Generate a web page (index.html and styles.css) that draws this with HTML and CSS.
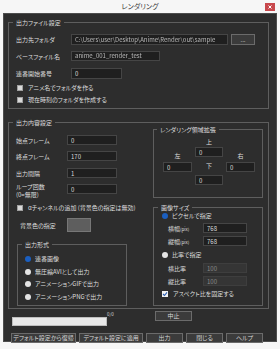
FILE: index.html
```html
<!DOCTYPE html>
<html>
<head>
    <meta charset="utf-8">
    <title>レンダリング</title>
    <link rel="stylesheet" href="styles.css">
</head>
<body>
<div class="window">
    <div class="titlebar">
        <span class="title">レンダリング</span>
        <span class="close">
            <svg width="4" height="4" viewBox="0 0 4 4"><path d="M0.5 0.5L3.5 3.5M3.5 0.5L0.5 3.5" stroke="#fff" stroke-width="1"/></svg>
        </span>
    </div>

    <div class="client">
        <fieldset class="group file-group">
            <legend>出力ファイル設定</legend>

            <div class="row">
                <label class="lbl">出力先フォルダ</label>
                <div class="field path"><span class="blurred">C:\Users\user\Desktop\Anime\Render\out\sample</span></div>
                <button class="btn browse">...</button>
            </div>
            <div class="row name-row">
                <label class="lbl">ベースファイル名</label>
                <div class="field basename"><span class="blurred">anime_001_render_test</span></div>
            </div>
            <div class="row start-row">
                <label class="lbl">連番開始番号</label>
                <input class="field start" value="0">
            </div>

            <label class="check first-check"><span class="box"></span>アニメ名でフォルダを作る</label>
            <label class="check"><span class="box"></span>現在時刻のフォルダを作成する</label>
        </fieldset>

        <fieldset class="group content-group">
            <legend>出力内容設定</legend>
            <div class="columns">
                <div class="left-col">
                    <div class="frow">
                        <label class="flbl">始点フレーム</label>
                        <input class="field short" value="0">
                    </div>
                    <div class="frow r2">
                        <label class="flbl">終点フレーム</label>
                        <input class="field short" value="170">
                    </div>
                    <div class="frow r3">
                        <label class="flbl">出力間隔</label>
                        <input class="field short" value="1">
                    </div>
                    <div class="frow loop-row">
                        <label class="flbl">ループ回数<br>(0=無限)</label>
                        <input class="field short" value="0">
                    </div>

                    <label class="check alpha-check"><span class="box"></span>αチャンネルの追加 (背景色の指定は無効)</label>

                    <div class="frow color-row">
                        <span class="flbl indent">背景色の指定</span>
                        <span class="swatch"></span>
                    </div>

                    <fieldset class="group format-group">
                        <legend>出力形式</legend>
                        <label class="radio"><span class="dot on"></span>連番画像</label>
                        <label class="radio"><span class="dot"></span>無圧縮AVIとして出力</label>
                        <label class="radio"><span class="dot"></span>アニメーションGIFで出力</label>
                        <label class="radio"><span class="dot"></span>アニメーションPNGで出力</label>
                    </fieldset>
                </div>

                <div class="right-col">
                    <fieldset class="group expand-group">
                        <legend>レンダリング領域拡張</legend>
                        <div class="expand-grid">
                            <span class="mid up">上</span>
                            <span class="side">左</span>
                            <input class="field cell" value="0">
                            <span class="side">右</span>
                            <input class="field cell lower" value="0">
                            <span class="mid down">下</span>
                            <input class="field cell lower" value="0">
                            <input class="field cell last" value="0">
                        </div>
                    </fieldset>

                    <fieldset class="group size-group">
                        <legend>画像サイズ</legend>
                        <label class="radio"><span class="dot on"></span>ピクセルで指定</label>
                        <div class="srow">
                            <span class="slbl">横幅<small>(pix)</small></span>
                            <input class="field size" value="768">
                        </div>
                        <div class="srow tight">
                            <span class="slbl">縦幅<small>(pix)</small></span>
                            <input class="field size" value="768">
                        </div>
                        <label class="radio ratio-radio"><span class="dot"></span>比率で指定</label>
                        <div class="srow">
                            <span class="slbl">横比率</span>
                            <input class="field size" value="100" disabled>
                        </div>
                        <div class="srow tight">
                            <span class="slbl">縦比率</span>
                            <input class="field size" value="100" disabled>
                        </div>
                        <label class="check aspect-check">
                            <span class="box checked">
                                <svg width="6" height="6" viewBox="0 0 6 6"><path d="M1 3L2.5 4.5L5 1.3" fill="none" stroke="#2b5fb5" stroke-width="1.1"/></svg>
                            </span>アスペクト比を固定する
                        </label>
                    </fieldset>
                </div>
            </div>
        </fieldset>

        <div class="footer">
            <div class="progress-row">
                <div class="progress-wrap">
                    <div class="progress"></div>
                    <span class="count">0/0</span>
                </div>
                <button class="btn small">中止</button>
            </div>
            <div class="button-row">
                <button class="btn reset-btn">デフォルト設定から復帰</button>
                <button class="btn apply-btn">デフォルト設定に適用</button>
                <button class="btn small push">出力</button>
                <button class="btn small">閉じる</button>
                <button class="btn small">ヘルプ</button>
            </div>
        </div>
    </div>
</div>
</body>
</html>
```

FILE: styles.css
```css
* {
    box-sizing: border-box;
}

body {
    margin: 0;
    background: #f6f6f6;
    font-family: "Noto Sans CJK JP", "Noto Sans", sans-serif;
    font-size: 6px;
    font-feature-settings: "palt";
    color: #dedede;
}

.window {
    width: 280px;
    height: 349px;
    background: #f6f6f6;
}

/* title bar */
.titlebar {
    height: 13px;
    display: grid;
    grid-template-columns: 1fr auto 1fr;
    align-items: center;
}

.title {
    grid-column: 2;
    font-size: 7px;
    line-height: 13px;
    color: #3a3a3a;
}

.close {
    grid-column: 3;
    justify-self: end;
    width: 10px;
    height: 8px;
    margin-right: 5px;
    background: #c8484c;
    display: flex;
    align-items: center;
    justify-content: center;
}

.close svg {
    display: block;
}

/* dark client area */
.client {
    margin: 0 3px;
    height: 329px;
    background: #2d2d2d;
    border: 1px solid #4d4d4d;
    padding: 4px 4px 0 4px;
}

.group {
    margin: 0;
    min-width: 0;
    border: 1px solid #5e5e5e;
    padding: 0 6px 4px 7px;
}

.group legend {
    padding: 0 3px;
    margin-left: -3px;
    line-height: 9px;
    color: #dedede;
}

.field {
    display: block;
    height: 10px;
    margin: 0;
    padding: 0 3px;
    border: 1px solid #454545;
    background: #1f1f1f;
    color: #dcdcdc;
    font-family: inherit;
    font-size: 6px;
    line-height: 8px;
    overflow: hidden;
    white-space: nowrap;
}

.field:disabled {
    background: #353535;
    border-color: #3e3e3e;
    color: #8a8a8a;
}

.btn {
    height: 10px;
    padding: 0;
    border: 1px solid #6b6b6b;
    background: #3b3b3b;
    color: #d6d6d6;
    font-family: inherit;
    font-size: 6px;
    line-height: 8px;
    font-feature-settings: "palt";
}

/* checkboxes & radios */
.check, .radio {
    display: flex;
    align-items: center;
    height: 8px;
    line-height: 8px;
    white-space: nowrap;
}

.box {
    width: 6px;
    height: 6px;
    margin: 0 5px 0 1px;
    background: #d9d9d9;
    border: 1px solid #a0a0a0;
}

.box.checked {
    background: #f2f2f2;
    border: none;
}

.box svg {
    display: block;
}

.dot {
    width: 6px;
    height: 6px;
    margin-right: 4px;
    border-radius: 50%;
    background: #e4e4e4;
}

.dot.on {
    background: #1b5fc0;
}

/* output file group */
.file-group {
    margin-right: 3px;
    padding-top: 7px;
}

.row {
    display: flex;
    align-items: center;
}

.lbl {
    width: 55px;
    white-space: nowrap;
}

.path {
    width: 157px;
    height: 11px;
    line-height: 9px;
}

.blurred {
    display: inline-block;
    color: #b8b8b8;
    filter: blur(0.7px);
}

.browse {
    width: 24px;
    height: 11px;
    margin-left: 3px;
}

.name-row {
    margin-top: 6px;
}

.basename {
    width: 89px;
}

.start-row {
    margin-top: 7px;
}

.start {
    width: 51px;
    height: 11px;
}

.first-check {
    margin-top: 5px;
}

.first-check + .check {
    margin-top: 4px;
}

/* output content group */
.content-group {
    margin: 9px 3px 0 0;
    padding: 0 5px 2px 7px;
}

.columns {
    display: grid;
    grid-template-columns: 137px 110px;
    align-items: start;
}

.left-col {
    padding-top: 8px;
}

.frow {
    display: flex;
    align-items: center;
}

.flbl {
    width: 51px;
    white-space: nowrap;
}

.short {
    width: 50px;
}

.r2 {
    margin-top: 6px;
}

.r3 {
    margin-top: 7px;
}

.loop-row {
    margin-top: 5px;
    align-items: flex-start;
    line-height: 7.5px;
}

.loop-row .field {
    margin-top: 1px;
}

.alpha-check {
    margin-top: 6px;
}

.color-row {
    margin-top: 6px;
}

.indent {
    padding-left: 4px;
}

.swatch {
    width: 24px;
    height: 14px;
    background: #5e5e5e;
    border: 1px solid #777;
}

.format-group {
    width: 110px;
    margin: 8px 0 0 1px;
    padding: 6px 4px 4px 7px;
}

.format-group .radio + .radio {
    margin-top: 4.5px;
}

/* right column */
.right-col {
    margin-top: -2px;
}

.expand-group {
    width: 110px;
    padding: 0 4px 12px 6px;
}

.expand-grid {
    display: grid;
    grid-template-columns: 29px 28px 29px;
    column-gap: 3px;
    margin: 4px 0 0 3px;
    text-align: center;
}

.mid {
    grid-column: 2;
    line-height: 8px;
}

.side {
    line-height: 8px;
    align-self: end;
    margin-bottom: -3px;
}

.up + .side {
    grid-column: 1;
}

.cell {
    width: 100%;
    margin-top: 1px;
}

.cell.lower, .down {
    margin-top: 5px;
}

.cell.last {
    grid-column: 2;
    margin-top: 3px;
}

.size-group {
    width: 110px;
    margin-top: 5px;
    padding: 0 4px 7px 8px;
}

.size-group legend {
    margin-left: -4px;
}

.srow {
    display: flex;
    align-items: center;
    margin-top: 3px;
}

.slbl {
    width: 41px;
    padding-left: 6px;
    white-space: nowrap;
}

.slbl small {
    font-size: 4.5px;
}

.size {
    width: 44px;
}

.ratio-radio {
    margin-top: 5px;
}

.ratio-radio + .srow {
    margin-top: 4px;
}

.aspect-check {
    margin-top: 4px;
}

.aspect-check .box {
    margin-left: 0;
}

/* footer */
.footer {
    margin-top: 2px;
    padding-left: 3px;
}

.progress-row {
    display: flex;
    align-items: flex-start;
}

.progress-wrap {
    width: 144px;
    display: flex;
    align-items: flex-start;
}

.progress {
    width: 95px;
    height: 9px;
    margin: 6px 0 0 1px;
    background: #e8e8e8;
    border: 1px solid #bdbdbd;
}

.count {
    font-size: 4.5px;
    line-height: 5px;
    margin-top: 1px;
    color: #cfcfcf;
}

.small {
    width: 37px;
}

.button-row {
    display: flex;
    margin-top: 7px;
}

.button-row .btn + .btn {
    margin-left: 3px;
}

.reset-btn {
    width: 65px;
}

.apply-btn {
    width: 64px;
}

.button-row .push {
    margin-left: 12px;
}
```
